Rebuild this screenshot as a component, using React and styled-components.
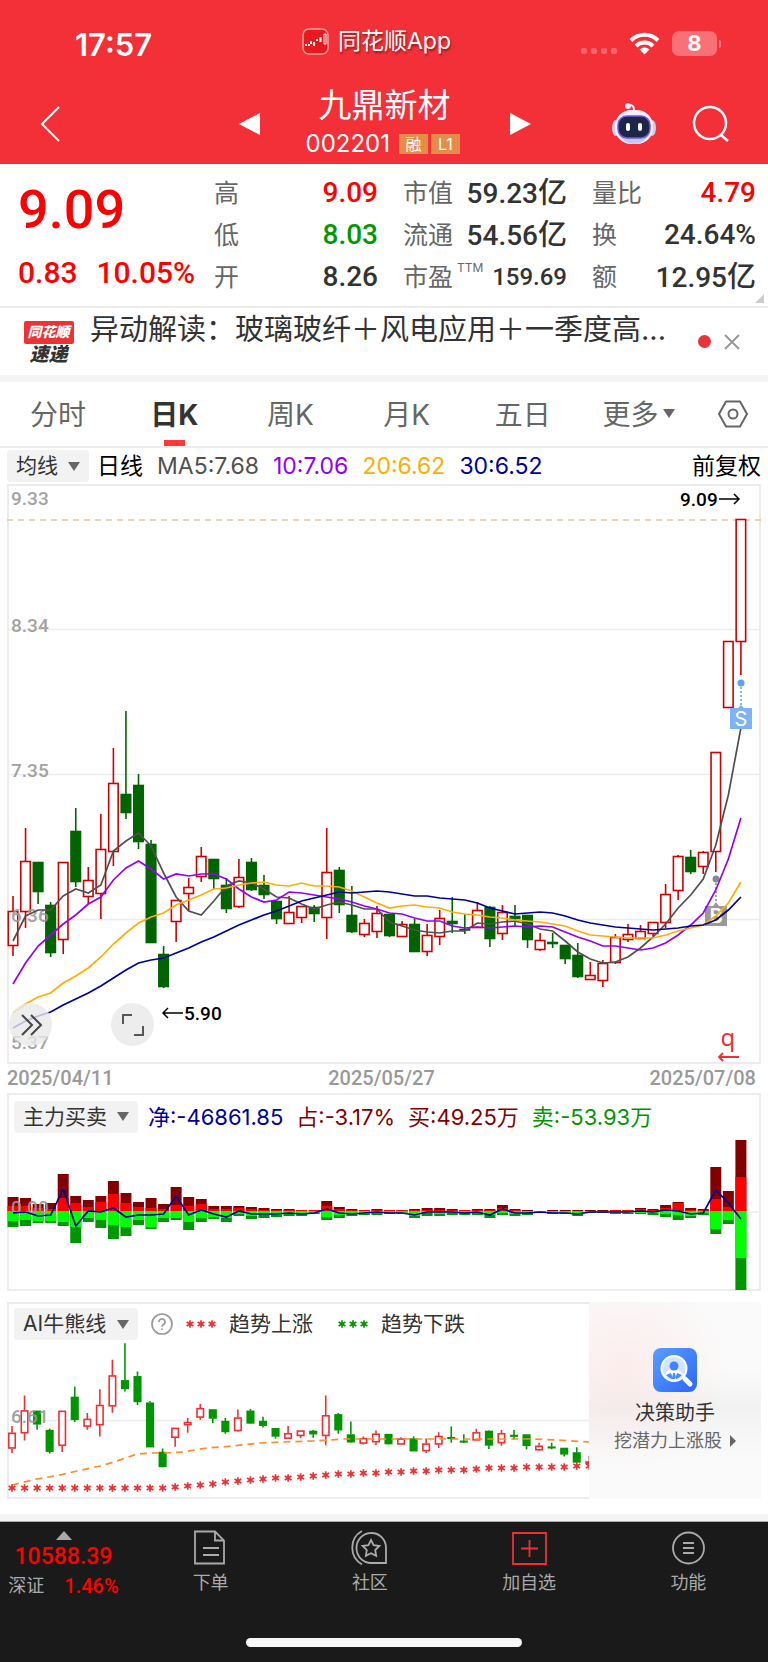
import React, { useState } from "react";
import styled, { createGlobalStyle, css } from "styled-components";

const din = `Roboto, "Noto Sans CJK SC", sans-serif`;
const sans = `Inter, "Noto Sans CJK SC", sans-serif`;

const GlobalStyle = createGlobalStyle`
  * {
    box-sizing: border-box;
  }
  body {
    margin: 0;
    background: #fff;
    color: #333;
    font-family: ${sans};
  }
  button, select {
    font-family: inherit;
    color: inherit;
    background: none;
    border: 0;
    padding: 0;
    cursor: pointer;
  }
`;

const Page = styled.div`
  display: flex;
  flex-direction: column;
  min-height: 100vh;
`;

const Header = styled.header`
  background: #f32f37;
  color: #fff;
`;

const StatusBar = styled.div`
  display: grid;
  grid-template-columns: 1fr auto 1fr;
  align-items: center;
  height: 84px;
  padding: 2px 51px 0 75px;
`;

const Time = styled.span`
  font-size: 31px;
  line-height: 36px;
  font-weight: 600;
  padding-top: 4px;
`;

const AppName = styled.span`
  display: flex;
  align-items: center;
  gap: 9px;
  font-size: 23px;
  line-height: 30px;
  padding: 0 39px 4px 0;
  text-shadow: 1px 2px 2px rgba(0, 0, 0, 0.4);
`;

const Signals = styled.span`
  display: flex;
  align-items: center;
  justify-content: flex-end;
  gap: 12px;
`;

const Battery = styled.span`
  position: relative;
  display: flex;
  align-items: center;
  justify-content: center;
  width: 45px;
  height: 25px;
  border-radius: 7px;
  background: rgba(255, 255, 255, 0.32);
  font-size: 22px;
  font-weight: 700;
  &::after {
    content: "";
    position: absolute;
    right: -4px;
    top: 9px;
    width: 2px;
    height: 8px;
    border-radius: 0 2px 2px 0;
    background: rgba(255, 255, 255, 0.35);
  }
`;

const TitleBar = styled.div`
  display: grid;
  grid-template-columns: 1fr auto 1fr;
  align-items: center;
  height: 80px;
  padding: 0 38px 0 39px;
`;

const TitleGroup = styled.div`
  display: flex;
  align-items: center;
  gap: 46px;
`;

const TitleText = styled.div`
  width: 158px;
  padding-bottom: 4px;
  text-align: center;
`;

const StockName = styled.h1`
  margin: 0 0 4px;
  font-size: 33px;
  line-height: 40px;
  font-weight: 400;
`;

const StockCode = styled.div`
  display: flex;
  align-items: center;
  gap: 3px;
  font-size: 24px;
  line-height: 30px;
`;

const Badge = styled.span`
  width: 29px;
  height: 20px;
  background: #e58d48;
  font-size: 16px;
  line-height: 20px;
  text-align: center;
  &:first-of-type {
    margin-left: 6px;
  }
`;

const Actions = styled.div`
  display: flex;
  align-items: center;
  justify-content: flex-end;
  gap: 36px;
`;

const IconButton = styled.button`
  display: flex;
  align-items: center;
  justify-content: center;
`;

const BackButton = styled(IconButton)`
  justify-content: flex-start;
`;

const Quote = styled.section`
  position: relative;
  display: grid;
  grid-template-columns: 171px repeat(3, minmax(0, 1fr));
  column-gap: 25px;
  padding: 8px 12px 0 18px;
  height: 144px;
  border-bottom: 2px solid #ececec;
`;

const PriceBox = styled.div`
  display: flex;
  flex-direction: column;
  font-family: ${din};
  font-weight: 500;
  color: #f00;
  white-space: nowrap;
`;

const Price = styled.strong`
  font-size: 54px;
  line-height: 76px;
  font-weight: 500;
`;

const Change = styled.div`
  display: flex;
  gap: 19px;
  font-size: 30px;
  line-height: 50px;
`;

const Stats = styled.dl`
  margin: 0;
`;

const Stat = styled.div`
  display: flex;
  justify-content: space-between;
  align-items: center;
  height: 42px;
  white-space: nowrap;
`;

const StatLabel = styled.dt`
  font-size: 25px;
  line-height: 42px;
  color: #666;
  sup {
    font-size: 12px;
    line-height: 12px;
    vertical-align: 14px;
    margin-left: 4px;
  }
`;

const StatValue = styled.dd`
  margin: 0;
  font-family: ${din};
  font-size: ${props => (props.$small ? 24 : 28)}px;
  line-height: 42px;
  font-weight: 500;
  color: ${props => props.$color || "#333"};
`;

const Unit = styled.span`
  font-size: 29px;
`;

const ExpandCorner = styled.span`
  position: absolute;
  right: 4px;
  bottom: 3px;
  border-left: 9px solid transparent;
  border-bottom: 9px solid #ccc;
`;

const News = styled.section`
  display: flex;
  align-items: center;
  height: 67px;
  padding: 0 28px 0 22px;
`;

const NewsBadge = styled.span`
  display: flex;
  flex-direction: column;
  align-items: center;
  width: 53px;
  margin-top: 2px;
  font-weight: 900;
  font-style: italic;
`;

const NewsBrand = styled.span`
  width: 50px;
  height: 23px;
  border-radius: 2px;
  background: #eb3336;
  color: #fff;
  font-size: 14px;
  line-height: 22px;
  text-align: center;
`;

const NewsKind = styled.span`
  font-size: 19px;
  line-height: 21px;
`;

const Headline = styled.a`
  flex: 1;
  margin: 0 20px 24px 15px;
  overflow: hidden;
  white-space: nowrap;
  text-overflow: ellipsis;
  font-size: 29px;
  line-height: 42px;
  color: #333;
  text-decoration: none;
`;

const Dot = styled.span`
  width: 13px;
  height: 13px;
  margin-right: 13px;
  border-radius: 50%;
  background: #eb3336;
`;

const Band = styled.div`
  height: 7px;
  background: #f4f4f4;
`;

const Tabs = styled.nav`
  display: flex;
  height: 66px;
  border-bottom: 2px solid #ececec;
`;

const Tab = styled.button`
  flex: 1;
  display: flex;
  align-items: center;
  justify-content: center;
  gap: 5px;
  padding-bottom: 2px;
  font-size: 28px;
  color: #666;
  ${props =>
    props.$active &&
    css`
      color: #333;
      font-weight: 700;
      background: linear-gradient(#fd3a38, #fd3a38) center bottom / 21px 6px
        no-repeat;
    `}
`;

const SettingsButton = styled(IconButton)`
  width: 71px;
`;

const Arrow = styled.i`
  border: ${props => props.$size || 6}px solid transparent;
  border-top: ${props => (props.$size || 6) + 3}px solid #666;
  border-bottom: 0;
`;

const Main = styled.main`
  padding: 0 7px;
`;

const Value = styled.span`
  color: ${props => props.$color};
  margin-left: ${props => (props.$end ? "auto" : 0)};
`;

const Averages = styled.div`
  display: flex;
  align-items: center;
  gap: 8px;
  height: 36px;
  font-size: 23px;
  line-height: 32px;
  white-space: nowrap;
  ${Value} + ${Value}:not(:last-child) {
    margin-left: 6px;
  }
`;

const Picker = styled.label`
  display: flex;
  align-items: center;
  height: 32px;
  padding: 0 9px;
  border-radius: 4px;
  background: #f2f2f2;
`;

const PickerSelect = styled.select`
  appearance: none;
  font-size: 21px;
  line-height: 30px;
  padding-right: 10px;
`;

const Panel = styled.section`
  position: relative;
  box-shadow: inset 0 0 0 2px #ececec;
  margin-bottom: ${props => props.$bottom || 0}px;
`;

const Chart = styled.svg`
  display: block;
  width: 100%;
  height: auto;
`;

const ChartText = styled.text`
  font-family: ${din};
  font-size: 19px;
  font-weight: 500;
  fill: ${props => props.$color || "#999"};
`;

const MarkText = styled.text`
  font-family: ${sans};
  font-size: 20px;
  font-weight: ${props => props.$weight || 400};
  text-anchor: middle;
  fill: #fff;
`;

const RoundButton = styled(IconButton)`
  position: absolute;
  left: ${props => props.$left}px;
  bottom: 18px;
  width: 43px;
  height: 43px;
  border-radius: 50%;
  background: rgba(232, 232, 232, 0.8);
`;

const Dates = styled.div`
  display: flex;
  justify-content: space-between;
  height: 29px;
  padding-right: 5px;
  font-family: ${din};
  font-size: 20px;
  line-height: 29px;
  font-weight: 500;
  color: #999;
`;

const Legend = styled.div`
  display: flex;
  align-items: center;
  gap: ${props => props.$gap}px;
  height: ${props => props.$height}px;
  padding: ${props => props.$top || 0}px 7px 0;
  font-size: ${props => props.$size || 22}px;
  line-height: 32px;
  white-space: nowrap;
  ${Value} + ${Value} {
    margin-left: 3px;
  }
  ${Value} + svg {
    margin-left: 12px;
  }
`;

const Split = styled.div`
  display: grid;
  grid-template-columns: 582fr 172fr;
`;

const Advisor = styled.a`
  display: flex;
  flex-direction: column;
  align-items: center;
  padding-top: 46px;
  color: #333;
  text-decoration: none;
  background: radial-gradient(
      ellipse at 20% 35%,
      rgba(255, 215, 215, 0.4),
      transparent 55%
    ),
    linear-gradient(#fafafa, #fafafa 35%, #f1f2f1 54%, #fafafa 80%);
`;

const AdvisorTitle = styled.strong`
  margin-top: 7px;
  font-size: 20px;
  line-height: 28px;
  font-weight: 400;
`;

const AdvisorNote = styled.span`
  display: flex;
  align-items: center;
  gap: 8px;
  font-size: 18px;
  line-height: 27px;
  color: #666;
`;

const Footer = styled.footer`
  flex: 1;
  display: flex;
  flex-direction: column;
  justify-content: space-between;
  min-height: 140px;
  border-top: 1px solid #aaa;
  background: #1a1a1a;
  color: #aaa;
`;

const FooterRow = styled.div`
  display: flex;
`;

const IndexBox = styled.button`
  width: 131px;
  display: flex;
  flex-direction: column;
  align-items: center;
  padding: 9px 4px 0 0;
  font-size: 18px;
  line-height: 24px;
`;

const IndexValue = styled.span`
  font-family: ${din};
  font-size: ${props => (props.$big ? 23 : 20)}px;
  line-height: ${props => (props.$big ? 34 : 24)}px;
  font-weight: 500;
  color: #f00;
`;

const IndexLine = styled.span`
  display: flex;
  align-items: center;
  gap: 20px;
`;

const FooterTab = styled.button`
  flex: 1;
  display: flex;
  flex-direction: column;
  align-items: center;
  gap: 4px;
  padding-top: 7px;
  font-size: 18px;
  line-height: 26px;
`;

const HomeBar = styled.div`
  align-self: center;
  width: 36%;
  height: 9px;
  margin-bottom: 15px;
  border-radius: 5px;
  background: #f7f7f7;
`;

const quotes = [
  [
    { label: "高", value: "9.09", color: "#f00" },
    { label: "低", value: "8.03", color: "#090" },
    { label: "开", value: "8.26" }
  ],
  [
    { label: "市值", value: "59.23", unit: "亿" },
    { label: "流通", value: "54.56", unit: "亿" },
    { label: "市盈", sup: "TTM", value: "159.69" }
  ],
  [
    { label: "量比", value: "4.79", color: "#f00" },
    { label: "换", value: "24.64%" },
    { label: "额", value: "12.95", unit: "亿" }
  ]
];

// direction, high, body top, body bottom, low (chart units, y down)
const candles = [
  ["r", 412, 427, 462, 472], ["r", 344, 377, 428, 444], ["g", 378, 378, 408, 420],
  ["g", 418, 421, 469, 473], ["r", 378, 378, 456, 470], ["g", 324, 347, 398, 403],
  ["r", 383, 396, 413, 420], ["r", 330, 365, 410, 435], ["r", 264, 299, 368, 382],
  ["g", 227, 310, 329, 335], ["g", 290, 301, 358, 365], ["g", 356, 360, 459, 459],
  ["g", 462, 470, 503, 504], ["r", 416, 416, 438, 458], ["r", 394, 403, 410, 427],
  ["r", 363, 372, 393, 398], ["g", 375, 375, 395, 405], ["g", 394, 401, 425, 429],
  ["r", 375, 393, 423, 424], ["g", 374, 378, 406, 407], ["g", 391, 401, 411, 415],
  ["g", 417, 417, 435, 440], ["r", 412, 428, 440, 440], ["r", 422, 422, 434, 439],
  ["g", 421, 423, 430, 438], ["r", 344, 388, 434, 455], ["g", 383, 386, 421, 429],
  ["g", 402, 431, 448, 449], ["r", 435, 439, 451, 453], ["r", 422, 429, 448, 454],
  ["g", 430, 430, 452, 453], ["r", 437, 440, 453, 453], ["g", 435, 440, 468, 468],
  ["r", 440, 451, 468, 472], ["r", 426, 434, 453, 461], ["g", 413, 437, 440, 449],
  ["g", 430, 445, 446, 450], ["r", 418, 426, 444, 444], ["g", 422, 423, 455, 463],
  ["r", 421, 428, 450, 456], ["g", 421, 432, 435, 442], ["g", 431, 431, 456, 464],
  ["r", 449, 456, 466, 467], ["g", 449, 458, 460, 464], ["g", 461, 461, 475, 480],
  ["g", 459, 471, 493, 494], ["r", 478, 491, 496, 496], ["r", 476, 479, 497, 503],
  ["r", 450, 453, 479, 480], ["r", 440, 450, 456, 458], ["r", 441, 447, 455, 455],
  ["r", 438, 438, 450, 452], ["r", 400, 410, 439, 444], ["r", 371, 372, 407, 416],
  ["g", 366, 373, 388, 390], ["r", 367, 368, 383, 390], ["r", 268, 268, 368, 388],
  ["r", 157, 157, 224, 224], ["r", 35, 35, 158, 191]
];

const averages = [
  {
    color: "#505050",
    points: [457, 432, 426, 426, 412, 405, 409, 401, 367, 357, 349, 362, 389, 413, 427, 431, 417, 402, 397, 399, 405, 413, 414, 420, 425, 421, 418, 421, 425, 425, 438, 442, 446, 448, 449, 447, 447, 439, 440, 438, 437, 440, 445, 447, 457, 468, 475, 479, 478, 473, 464, 453, 440, 424, 411, 395, 361, 311, 244]
  },
  {
    color: "#9000ff",
    points: [500, 479, 462, 451, 440, 431, 420, 413, 396, 384, 377, 385, 395, 390, 392, 390, 390, 395, 405, 413, 418, 416, 408, 409, 411, 413, 415, 418, 422, 425, 429, 430, 434, 437, 437, 442, 444, 443, 444, 443, 442, 443, 442, 443, 448, 453, 457, 462, 462, 464, 466, 464, 459, 451, 441, 429, 406, 375, 334]
  },
  {
    color: "#ffae00",
    points: [529, 520, 513, 509, 499, 492, 484, 473, 460, 449, 439, 433, 429, 421, 416, 411, 405, 404, 401, 399, 398, 401, 402, 399, 402, 402, 403, 407, 413, 419, 424, 422, 421, 423, 424, 428, 430, 431, 433, 434, 436, 437, 438, 440, 442, 447, 451, 452, 453, 454, 454, 454, 451, 447, 444, 441, 432, 419, 398]
  },
  {
    color: "#00009c",
    points: [544, 537, 532, 528, 521, 515, 509, 502, 494, 486, 479, 476, 474, 469, 464, 458, 453, 447, 441, 436, 431, 427, 422, 417, 414, 411, 408, 409, 408, 407, 408, 410, 412, 412, 414, 415, 416, 419, 424, 427, 430, 429, 428, 429, 432, 436, 439, 441, 443, 444, 445, 446, 445, 444, 442, 441, 436, 426, 413]
  }
];

// buy total, buy main, sell main, sell total, net
const flows = [
  [14, 5, 10, 16, 2], [13, 5, 9, 15, 1], [7, 3, 10, 12, 5], [8, 2, 10, 12, 4],
  [37, 13, 11, 15, -22], [15, 8, 16, 32, 15], [11, 4, 7, 11, 0], [15, 9, 9, 17, 1],
  [30, 17, 14, 28, -3], [18, 8, 16, 25, 6], [9, 4, 9, 14, 4], [13, 3, 16, 18, 4],
  [7, 2, 7, 11, 3], [24, 6, 7, 9, -15], [14, 5, 11, 19, 4], [12, 7, 7, 11, -1],
  [5, 2, 6, 8, 3], [5, 2, 7, 11, 6], [5, 3, 3, 5, 0], [4, 2, 5, 8, 3],
  [3, 1, 4, 7, 3], [2, 1, 4, 6, 3], [2, 1, 3, 5, 2], [1, 1, 3, 5, 3],
  [1, 1, 2, 3, 2], [10, 5, 6, 9, -2], [4, 2, 4, 7, 2], [2, 1, 3, 5, 3],
  [1, 1, 3, 4, 2], [2, 1, 2, 4, 1], [1, 1, 2, 3, 2], [1, 1, 2, 3, 2],
  [2, 1, 5, 7, 4], [3, 1, 2, 5, 1], [3, 1, 3, 5, 1], [2, 1, 2, 4, 1],
  [1, 1, 2, 4, 2], [2, 1, 2, 4, 1], [2, 1, 4, 7, 4], [6, 3, 2, 4, -2],
  [2, 1, 3, 5, 2], [1, 0, 2, 4, 2], [0, 0, 1, 2, 1], [1, 0, 2, 3, 2],
  [1, 0, 2, 3, 2], [1, 0, 3, 5, 3], [1, 0, 1, 2, 1], [1, 0, 1, 2, 1],
  [1, 1, 2, 3, 1], [1, 1, 2, 3, 1], [3, 2, 2, 3, 0], [2, 1, 2, 4, 1],
  [6, 3, 3, 6, -1], [9, 8, 4, 9, 0], [3, 1, 5, 7, 3], [2, 1, 2, 4, 2],
  [44, 12, 18, 23, -21], [20, 4, 9, 13, -8], [71, 34, 47, 79, 8]
];

const trend = "5,183 30,177 53,173 70,169 93,164 110,159 130,152 146,151 160,151 176,150 200,146 226,144 253,141 276,140 306,139 336,137 393,137 523,137 550,138 582,140";

const stars = [186, 186, 186, 186, 186, 186, 186, 186, 186, 186, 186, 186, 186, 185, 184, 183, 182, 180, 179, 178, 177, 176, 176, 175, 174, 173, 172, 172, 171, 171, 170, 170, 169, 169, 168, 168, 168, 167, 166, 166, 166, 165, 165, 165, 165, 164, 164];

const xOf = i => 6 + i * 12.55;
const toPoints = list => list.map((y, i) => `${xOf(i)},${y}`).join(" ");
const miniY = y => y * 0.448 - 60.5;

function Candles({ data, width, up, down, scale = y => y, shift = 0 }) {
  return data.map(([kind, high, top, bottom, low], i) => {
    const x = xOf(i) + shift;
    const color = kind === "r" ? up : down;
    const [h, t, b, l] = [high, top, bottom, low].map(scale);
    return (
      <g key={i} stroke={color} strokeWidth="1.6">
        <path d={`M${x} ${h}V${t}M${x} ${b}V${l}`} />
        <rect
          x={x - width / 2}
          y={t + 0.5}
          width={width}
          height={Math.max(b - t - 1, 0.5)}
          fill={kind === "r" ? "#fff" : color}
        />
      </g>
    );
  });
}

function Star({ x, y, color }) {
  return (
    <path
      d={`M${x} ${y - 3.8}v7.6M${x - 3.4} ${y - 2}l6.8 4M${x - 3.4} ${y + 2}l6.8 -4`}
      stroke={color}
      strokeWidth="1.7"
    />
  );
}

function KLineChart() {
  return (
    <Panel>
      <Chart viewBox="0 0 754 580" role="img" aria-label="日K线图">
        <path d="M0 145.5H754M0 290.5H754M0 435.5H754" stroke="#ececec" strokeWidth="1.5" />
        <path d="M0 36H754" stroke="#e5c8a0" strokeWidth="1.5" strokeDasharray="6 5" />
        <Candles data={candles} width={9.5} up="#cf0000" down="#006400" />
        <g opacity="0.9">
          <ChartText x="4" y="21">9.33</ChartText>
          <ChartText x="4" y="148">8.34</ChartText>
          <ChartText x="4" y="293">7.35</ChartText>
          <ChartText x="4" y="438">6.36</ChartText>
          <ChartText x="4" y="565">5.37</ChartText>
        </g>
        <circle cx="709" cy="395" r="3.5" fill="#888" />
        <path d="M709 399V420" stroke="#888" strokeWidth="1.5" strokeDasharray="2 2" />
        <path d="M698 422h8l3-4 3 4h8v20h-22z" fill="#999" />
        <MarkText x="709" y="439" $weight={600}>B</MarkText>
        {averages.map(line => (
          <polyline
            key={line.color}
            points={toPoints(line.points)}
            fill="none"
            stroke={line.color}
            strokeWidth="1.7"
          />
        ))}
        <circle cx="734" cy="199" r="3.5" fill="#5fa3f0" />
        <path d="M734 203V222" stroke="#5fa3f0" strokeWidth="1.5" strokeDasharray="2 2" />
        <path d="M723 224h8l3-3 3 3h8v21h-22z" fill="#7db3f5" />
        <MarkText x="734" y="242">S</MarkText>
        <ChartText x="673" y="22" $color="#000">9.09</ChartText>
        <path d="M712 15h20m-5-5l5 5-5 5" fill="none" stroke="#000" strokeWidth="1.5" />
        <ChartText x="177" y="536" $color="#000">5.90</ChartText>
        <path d="M176 529h-20m5-5l-5 5 5 5" fill="none" stroke="#000" strokeWidth="1.5" />
        <text x="721" y="562" fontFamily="Noto Sans" fontSize="24" textAnchor="middle" fill="#ee3030">q</text>
        <path d="M732 573h-20m4-4l-4 4 4 4" fill="none" stroke="#ee3030" strokeWidth="1.8" />
      </Chart>
      <RoundButton $left={2} aria-label="展开">
        <svg width="24" height="24" viewBox="0 0 24 24" fill="none" stroke="#444" strokeWidth="2">
          <path d="M3 2l10 10L3 22M12 2l10 10-10 10" />
        </svg>
      </RoundButton>
      <RoundButton $left={104} aria-label="全屏">
        <svg width="24" height="24" viewBox="0 0 24 24" fill="none" stroke="#555" strokeWidth="2">
          <path d="M2 11V2h9M22 13v9h-9" />
        </svg>
      </RoundButton>
    </Panel>
  );
}

function FlowChart() {
  const zero = 118;
  return (
    <Chart viewBox="0 47 754 151" role="img" aria-label="主力买卖">
      <path d="M0 119H754" stroke="#ececec" strokeWidth="1.5" />
      {flows.map(([buy, buyMain, sellMain, sell], i) => {
        const x = xOf(i) - 5.5;
        return (
          <g key={i}>
            <rect x={x} y={zero - buy} width="11" height={buy} fill="#840000" />
            <rect x={x} y={zero - buyMain} width="11" height={buyMain} fill="#f00" />
            <rect x={x} y={zero} width="11" height={sell} fill="#009600" />
            <rect x={x} y={zero} width="11" height={sellMain} fill="#0f0" />
          </g>
        );
      })}
      <ChartText x="4" y="121" opacity="0.9">0.00</ChartText>
      <polyline
        points={toPoints(flows.map(flow => zero + flow[4]))}
        fill="none"
        stroke="#00009c"
        strokeWidth="1.7"
      />
    </Chart>
  );
}

function TrendChart() {
  return (
    <Chart viewBox="0 40 582 157" role="img" aria-label="AI牛熊线">
      <path d="M0 118.5H582" stroke="#ececec" strokeWidth="1.5" />
      <Candles
        data={candles.slice(0, 47)}
        width={6.5}
        up="#ee3035"
        down="#009600"
        scale={miniY}
        shift={-1}
      />
      <ChartText x="4" y="121" opacity="0.9">6.61</ChartText>
      <polyline points={trend} fill="none" stroke="#ff8c26" strokeWidth="1.7" strokeDasharray="7 5" />
      {stars.map((y, i) => (
        <Star key={i} x={xOf(i) - 1} y={y} color="#ee3035" />
      ))}
    </Chart>
  );
}

function StarKey({ color }) {
  return (
    <svg width="30" height="8" viewBox="0 0 30 8">
      <Star x={4} y={4} color={color} />
      <Star x={15} y={4} color={color} />
      <Star x={26} y={4} color={color} />
    </svg>
  );
}

function Robot() {
  return (
    <svg width="44" height="44" viewBox="0 0 44 44">
      <path d="M22 8c0-4-2-5-4-5" fill="none" stroke="#e8ebfa" strokeWidth="2" />
      <circle cx="16" cy="4" r="3" fill="#e8ebfa" />
      <ellipse cx="4" cy="26" rx="4" ry="8" fill="#c9d0f0" />
      <ellipse cx="40" cy="26" rx="4" ry="8" fill="#c9d0f0" />
      <rect x="3" y="8" width="38" height="34" rx="16" fill="#eef0fc" />
      <path d="M7 33c4 6 9 9 15 9s11-3 15-9z" fill="#c3caf0" />
      <rect x="6" y="14" width="32" height="22" rx="9" fill="#1e2648" stroke="#7a55dc" strokeWidth="1.5" />
      <rect x="14" y="21" width="4" height="8" rx="2" fill="#fff" />
      <rect x="26" y="21" width="4" height="8" rx="2" fill="#fff" />
    </svg>
  );
}

function AdvisorIcon() {
  return (
    <svg width="44" height="44" viewBox="0 0 44 44">
      <defs>
        <linearGradient id="advisor" x1="0" y1="0" x2="1" y2="1">
          <stop offset="0" stopColor="#5a9eff" />
          <stop offset="1" stopColor="#2c67f8" />
        </linearGradient>
      </defs>
      <rect width="44" height="44" rx="8" fill="url(#advisor)" />
      <path d="M32 31l5 5" stroke="#fff" strokeWidth="5" strokeLinecap="round" />
      <circle cx="21" cy="20.5" r="13.5" fill="#fff" />
      <circle cx="21" cy="20.5" r="11.5" fill="#d3e4ff" />
      <path d="M12 27c2-4 4-6 9-6s7 2 9 6c-5 6-13 6-18 0z" fill="#fff" />
      <path d="M13 27l5-2 2 6c-3 0-5-2-7-4zM29 27l-5-2-2 6c3 0 5-2 7-4zM20 25h2l1 6h-4z" fill="#4a8cfb" />
      <circle cx="21" cy="18" r="4.5" fill="#3f84fa" />
    </svg>
  );
}

const footerTabs = [
  {
    label: "下单",
    icon: <path d="M3 2.5h20l9 9V34.500H3zM23 2.500v9h9M11 19h16M11 26h16" />
  },
  {
    label: "社区",
    icon: (
      <>
        <path d="M20 4a14.5 15 0 1 0 0 30h15V19A14.5 15 0 0 0 20 4z" />
        <path d="M11 2C-2 9-2 28 11 35.5" />
        <path d="M20 11l2.6 5.2 5.8.8-4.2 4.1 1 5.8-5.2-2.700-5.200 2.700 1-5.800-4.200-4.100 5.800-.8z" />
      </>
    )
  },
  {
    label: "加自选",
    color: "#ee3035",
    icon: <path d="M2 4h33v31H2zM18.5 11v17M10 19.500h17" />
  },
  {
    label: "功能",
    icon: (
      <>
        <circle cx="18.5" cy="19" r="15.5" />
        <path d="M13 14h11M13 19h11M13 24h11" />
      </>
    )
  }
];

const tabs = ["分时", "日K", "周K", "月K", "五日"];

export default function App() {
  const [tab, setTab] = useState("日K");

  return (
    <Page>
      <GlobalStyle />
      <Header>
        <StatusBar>
          <Time>17:57</Time>
          <AppName>
            <svg width="27" height="27" viewBox="0 0 27 27">
              <rect x="1" y="1" width="25" height="25" rx="6" fill="#e8181f" stroke="#ffa0a0" strokeWidth="1.5" />
              <path d="M3 17h2M6 17h2M9 13v3M12 14v4M15 11v2M18.500 9v5" stroke="#fff" strokeWidth="2" />
              <path d="M22 6h2v10h-2z" fill="none" stroke="#fff" strokeWidth="1" />
            </svg>
            同花顺App
          </AppName>
          <Signals>
            <svg width="36" height="25" viewBox="0 0 36 25" fill="#fff" opacity="0.25">
              <rect x="0" y="17" width="6" height="6" rx="2" />
              <rect x="10" y="17" width="6" height="6" rx="2" />
              <rect x="20" y="17" width="6" height="6" rx="2" />
              <rect x="30" y="17" width="6" height="6" rx="2" />
            </svg>
            <svg width="31" height="23" viewBox="0 0 31 23" fill="none" stroke="#fff" strokeWidth="4">
              <path d="M2 8.5a19 19 0 0 1 27 0M7 14a12 12 0 0 1 17 0" />
              <path d="M10.5 17.5a7 7 0 0 1 10 0l-5 5z" fill="#fff" stroke="none" />
            </svg>
            <Battery>8</Battery>
          </Signals>
        </StatusBar>
        <TitleBar>
          <BackButton aria-label="返回">
            <svg width="22" height="36" viewBox="0 0 22 36" fill="none" stroke="#fff" strokeWidth="2">
              <path d="M20 1L3 18l17 17" />
            </svg>
          </BackButton>
          <TitleGroup>
            <IconButton aria-label="上一只">
              <svg width="21" height="22" viewBox="0 0 21 22" fill="#fff">
                <path d="M21 0v22L0 11z" />
              </svg>
            </IconButton>
            <TitleText>
              <StockName>九鼎新材</StockName>
              <StockCode>
                002201
                <Badge>融</Badge>
                <Badge>L1</Badge>
              </StockCode>
            </TitleText>
            <IconButton aria-label="下一只">
              <svg width="21" height="22" viewBox="0 0 21 22" fill="#fff">
                <path d="M0 0v22l21-11z" />
              </svg>
            </IconButton>
          </TitleGroup>
          <Actions>
            <IconButton aria-label="问财助手">
              <Robot />
            </IconButton>
            <IconButton aria-label="搜索">
              <svg width="38" height="38" viewBox="0 0 38 38" fill="none" stroke="#fff" strokeWidth="2.5">
                <circle cx="18" cy="18" r="16" />
                <path d="M29 30l7 6" />
              </svg>
            </IconButton>
          </Actions>
        </TitleBar>
      </Header>

      <Quote>
        <PriceBox>
          <Price>9.09</Price>
          <Change>
            <span>0.83</span>
            <span>10.05%</span>
          </Change>
        </PriceBox>
        {quotes.map((column, i) => (
          <Stats key={i}>
            {column.map(item => (
              <Stat key={item.label}>
                <StatLabel>
                  {item.label}
                  {item.sup && <sup>{item.sup}</sup>}
                </StatLabel>
                <StatValue $color={item.color} $small={item.sup}>
                  {item.value}
                  {item.unit && <Unit>{item.unit}</Unit>}
                </StatValue>
              </Stat>
            ))}
          </Stats>
        ))}
        <ExpandCorner />
      </Quote>

      <News>
        <NewsBadge>
          <NewsBrand>同花顺</NewsBrand>
          <NewsKind>速递</NewsKind>
        </NewsBadge>
        <Headline href="#news">异动解读：玻璃玻纤＋风电应用＋一季度高...</Headline>
        <Dot />
        <IconButton aria-label="关闭">
          <svg width="16" height="16" viewBox="0 0 16 16" stroke="#999" strokeWidth="2">
            <path d="M1 1l14 14M15 1L1 15" />
          </svg>
        </IconButton>
      </News>
      <Band />

      <Tabs>
        {tabs.map(name => (
          <Tab key={name} $active={name === tab} onClick={() => setTab(name)}>
            {name}
          </Tab>
        ))}
        <Tab>
          更多
          <Arrow />
        </Tab>
        <SettingsButton aria-label="设置">
          <svg width="30" height="28" viewBox="0 0 30 28" fill="none" stroke="#666" strokeWidth="2">
            <path d="M8 1.5h14L29 14l-7 12.5H8L1 14z" strokeLinejoin="round" />
            <circle cx="15" cy="14" r="4.5" />
          </svg>
        </SettingsButton>
      </Tabs>

      <Main>
        <Averages>
          <Picker>
            <PickerSelect aria-label="主图指标">
              <option>均线</option>
            </PickerSelect>
            <Arrow />
          </Picker>
          <Value $color="#000">日线</Value>
          <Value $color="#505050">MA5:7.68</Value>
          <Value $color="#9000ff">10:7.06</Value>
          <Value $color="#ffae00">20:6.62</Value>
          <Value $color="#00009c">30:6.52</Value>
          <Value $color="#000" $end>前复权</Value>
        </Averages>
        <KLineChart />
        <Dates>
          <span>2025/04/11</span>
          <span>2025/05/27</span>
          <span>2025/07/08</span>
        </Dates>

        <Panel $bottom={11}>
          <Legend $height={47} $gap={10}>
            <Picker>
              <PickerSelect aria-label="副图指标一">
                <option>主力买卖</option>
              </PickerSelect>
              <Arrow />
            </Picker>
            <Value $color="#00009c">净:-46861.85</Value>
            <Value $color="#840000">占:-3.17%</Value>
            <Value $color="#840000">买:49.25万</Value>
            <Value $color="#009600">卖:-53.93万</Value>
          </Legend>
          <FlowChart />
        </Panel>

        <Panel $bottom={15}>
          <Split>
            <div>
              <Legend $height={40} $gap={13} $top={4} $size={21}>
                <Picker>
                  <PickerSelect aria-label="副图指标二">
                    <option>AI牛熊线</option>
                  </PickerSelect>
                  <Arrow />
                </Picker>
                <IconButton aria-label="说明">
                  <svg width="22" height="22" viewBox="0 0 22 22" fill="none" stroke="#999" strokeWidth="1.7">
                    <circle cx="11" cy="11" r="10" />
                    <path d="M8 9a3 3 0 1 1 4.5 2.5c-1 .6-1.5 1-1.5 2.3M11 15.5v1.5" />
                  </svg>
                </IconButton>
                <StarKey color="#ee3035" />
                <Value $color="#333">趋势上涨</Value>
                <StarKey color="#009600" />
                <Value $color="#333">趋势下跌</Value>
              </Legend>
              <TrendChart />
            </div>
            <Advisor href="#advisor">
              <AdvisorIcon />
              <AdvisorTitle>决策助手</AdvisorTitle>
              <AdvisorNote>
                挖潜力上涨股
                <svg width="6" height="12" viewBox="0 0 6 12" fill="#666">
                  <path d="M0 0l6 6-6 6z" />
                </svg>
              </AdvisorNote>
            </Advisor>
          </Split>
        </Panel>
      </Main>
      <Band />

      <Footer>
        <FooterRow>
          <IndexBox>
            <svg width="16" height="9" viewBox="0 0 16 9" fill="#aaa">
              <path d="M8 0l8 9H0z" />
            </svg>
            <IndexValue $big>10588.39</IndexValue>
            <IndexLine>
              深证
              <IndexValue>1.46%</IndexValue>
            </IndexLine>
          </IndexBox>
          {footerTabs.map(item => (
            <FooterTab key={item.label}>
              <svg
                width="37"
                height="37"
                viewBox="0 0 37 37"
                fill="none"
                stroke={item.color || "#aaa"}
                strokeWidth="1.8"
              >
                {item.icon}
              </svg>
              {item.label}
            </FooterTab>
          ))}
        </FooterRow>
        <HomeBar />
      </Footer>
    </Page>
  );
}
